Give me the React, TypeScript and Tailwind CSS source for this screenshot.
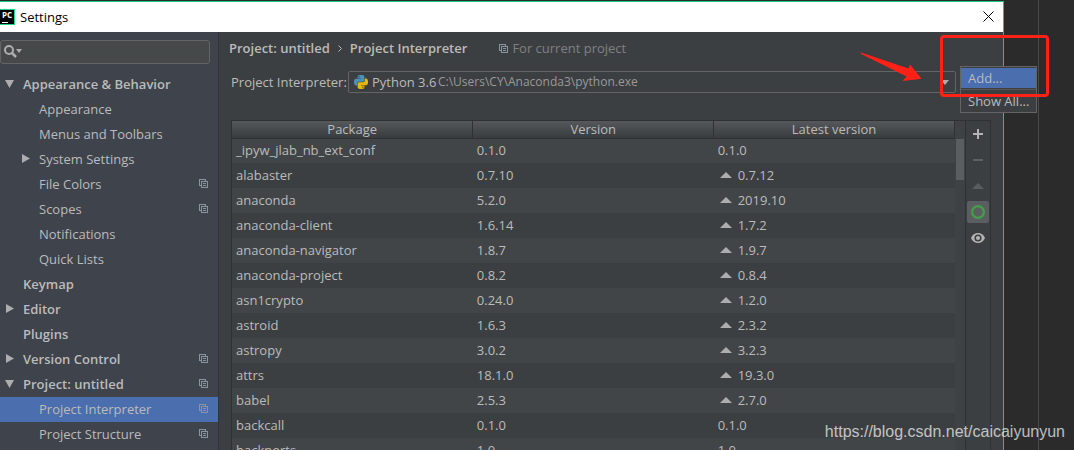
import { clsx } from 'clsx';

type TreeItem = {
    label: string;
    level: 0 | 1;
    arrow?: 'open' | 'closed';
    perProject?: boolean;
    selected?: boolean;
};

const treeItems: TreeItem[] = [
    { label: 'Appearance & Behavior', level: 0, arrow: 'open' },
    { label: 'Appearance', level: 1 },
    { label: 'Menus and Toolbars', level: 1 },
    { label: 'System Settings', level: 1, arrow: 'closed' },
    { label: 'File Colors', level: 1, perProject: true },
    { label: 'Scopes', level: 1, perProject: true },
    { label: 'Notifications', level: 1 },
    { label: 'Quick Lists', level: 1 },
    { label: 'Keymap', level: 0 },
    { label: 'Editor', level: 0, arrow: 'closed' },
    { label: 'Plugins', level: 0 },
    { label: 'Version Control', level: 0, arrow: 'closed', perProject: true },
    { label: 'Project: untitled', level: 0, arrow: 'open', perProject: true },
    { label: 'Project Interpreter', level: 1, perProject: true, selected: true },
    { label: 'Project Structure', level: 1, perProject: true },
];

const packages = [
    { name: '_ipyw_jlab_nb_ext_conf', version: '0.1.0', latest: '0.1.0' },
    { name: 'alabaster', version: '0.7.10', latest: '0.7.12' },
    { name: 'anaconda', version: '5.2.0', latest: '2019.10' },
    { name: 'anaconda-client', version: '1.6.14', latest: '1.7.2' },
    { name: 'anaconda-navigator', version: '1.8.7', latest: '1.9.7' },
    { name: 'anaconda-project', version: '0.8.2', latest: '0.8.4' },
    { name: 'asn1crypto', version: '0.24.0', latest: '1.2.0' },
    { name: 'astroid', version: '1.6.3', latest: '2.3.2' },
    { name: 'astropy', version: '3.0.2', latest: '3.2.3' },
    { name: 'attrs', version: '18.1.0', latest: '19.3.0' },
    { name: 'babel', version: '2.5.3', latest: '2.7.0' },
    { name: 'backcall', version: '0.1.0', latest: '0.1.0' },
    { name: 'backports', version: '1.0', latest: '1.0' },
];

const PYTHON_HALF =
    'M14.25.18l.9.2.73.26.59.3.45.32.34.34.25.34.16.33.1.3.04.26.02.2-.01.13V8.5l-.05.63-.13.55-.21.46-.26.38-.3.31-.33.25-.35.19-.35.14-.33.1-.3.07-.26.04-.21.02H8.77l-.69.05-.59.14-.5.22-.41.27-.33.32-.27.35-.2.36-.15.37-.1.35-.07.32-.04.27-.02.21v3.06H3.17l-.21-.03-.28-.07-.32-.12-.35-.18-.36-.26-.36-.36-.35-.46-.32-.59-.28-.73-.21-.88-.14-1.05-.05-1.23.06-1.22.16-1.04.24-.87.32-.71.36-.57.4-.44.42-.33.42-.24.4-.16.36-.1.32-.05.24-.01h.16l.06.01h8.16v-.83H6.18l-.01-2.75-.02-.37.05-.34.11-.31.17-.28.25-.26.31-.23.38-.2.44-.18.51-.15.58-.12.64-.1.71-.06.77-.04.84-.02 1.27.05zm-6.3 1.98l-.23.33-.08.41.08.41.23.34.33.22.41.09.41-.09.33-.22.23-.34.08-.41-.08-.41-.23-.33-.33-.22-.41-.09-.41.09z';

const PythonIcon = () => (
    <svg viewBox="0 0 24 24" className="h-[14px] w-[14px]" aria-hidden="true">
        <path d={PYTHON_HALF} fill="#4a92b8" />
        <path d={PYTHON_HALF} fill="#e6b70c" transform="rotate(180 12 12)" />
    </svg>
);

const ProjectIcon = () => (
    <svg viewBox="0 0 9 9" className="h-[9px] w-[9px] shrink-0" fill="none" stroke="#8a949e" shapeRendering="crispEdges" aria-hidden="true">
        <path d="M2 6.5H.5v-6h6V2M2.5 2.5h6v6h-6zM4 4.5h3M4 6.5h3" />
    </svg>
);

const TreeArrow = ({ kind }: { kind: 'open' | 'closed' }) => (
    <svg viewBox="0 0 9 9" className="h-[9px] w-[9px]" fill="#adadad" aria-hidden="true">
        {kind === 'open' ? <path d="M0 1h9L4.5 9z" /> : <path d="M1 0v9L9 4.5z" />}
    </svg>
);

const UpIcon = ({ className }: { className?: string }) => (
    <svg viewBox="0 0 12 6" className={clsx('h-[6px] w-[12px]', className)} fill="currentColor" aria-hidden="true">
        <path d="M0 6 6 0l6 6z" />
    </svg>
);

const TitleBar = () => (
    <header className="flex h-[30px] shrink-0 items-center bg-white pb-px">
        <span className="flex h-[16px] w-[15px] flex-col border border-l-0 border-[#21d789] bg-black pl-[2px]">
            <span className="text-[8px] leading-[10px] font-bold text-white">PC</span>
            <span className="mt-[2px] h-px w-[6px] bg-white" />
        </span>
        <h1 className="ml-[5px] flex-1 text-black">Settings</h1>
        <button type="button" aria-label="Close" className="mr-[9px]">
            <svg viewBox="0 0 11 11" className="h-[11px] w-[11px]" stroke="#000" fill="none" aria-hidden="true">
                <path d="M.5.5l10 10M10.5.5l-10 10" />
            </svg>
        </button>
    </header>
);

const Sidebar = () => (
    <nav className="w-[219px] shrink-0 border-r border-[#323437] bg-[#3f434c] pt-2">
        <div className="mr-2 flex h-6 items-center rounded-[3px] border border-[#646464] bg-[#45494a] pb-px pl-[3px]">
            <svg viewBox="0 0 18 13" className="h-[13px] w-[18px]" aria-hidden="true">
                <circle cx="5" cy="5" r="4" fill="none" stroke="#adadad" strokeWidth="2" />
                <path d="M7.5 7.5l4.5 4.5" stroke="#adadad" strokeWidth="2.5" />
                <path d="M12 4h6l-3 4z" fill="#adadad" />
            </svg>
            <input type="text" aria-label="Search settings" className="min-w-0 flex-1 bg-transparent px-1 outline-none" />
        </div>
        <ul className="mt-2">
            {treeItems.map((item) => (
                <li key={item.label}>
                    <button
                        type="button"
                        className={clsx(
                            'flex h-[25px] w-full items-center pr-[10px] pb-[2px] text-left',
                            item.level === 0 ? 'pl-[5px] font-semibold' : 'pl-[21px]',
                            item.selected && 'bg-[#4b6eaf]'
                        )}
                    >
                        <span className="flex w-[18px] shrink-0 items-center">
                            {item.arrow && <TreeArrow kind={item.arrow} />}
                        </span>
                        <span className="flex-1 whitespace-nowrap">{item.label}</span>
                        {item.perProject && <ProjectIcon />}
                    </button>
                </li>
            ))}
        </ul>
    </nav>
);

const PackageTable = () => (
    <div className="flex min-w-0 flex-1 overflow-hidden border-l border-[#2f3133]">
        <table className="w-full table-fixed self-start border-collapse">
            <thead>
                <tr className="h-[17px] bg-linear-to-b from-[#55595c] to-[#393c3e]">
                    {['Package', 'Version', 'Latest version'].map((title) => (
                        <th
                            key={title}
                            scope="col"
                            className="w-1/3 border-r border-b border-[#2f3133] p-0 text-center leading-[16px] font-normal"
                        >
                            {title}
                        </th>
                    ))}
                </tr>
            </thead>
            <tbody>
                {packages.map((pkg) => (
                    <tr key={pkg.name} className="h-[25px] odd:bg-[#414547]">
                        <td className="p-0 pb-px pl-1">{pkg.name}</td>
                        <td className="p-0 pb-px pl-1">{pkg.version}</td>
                        <td className="p-0 pb-px pl-1">
                            <span className="flex items-center">
                                {pkg.latest !== pkg.version && <UpIcon className="mr-[6px] ml-[2px] text-[#adadad]" />}
                                {pkg.latest}
                            </span>
                        </td>
                    </tr>
                ))}
            </tbody>
        </table>
        {/* scrollbar */}
        <div className="w-[10px] shrink-0 bg-[#3f4244] px-px pt-[18px]">
            <div className="h-[41px] bg-[#5b5e60]" />
        </div>
    </div>
);

const Toolbar = () => (
    <div className="flex w-[26px] shrink-0 flex-col items-center gap-1 border-x border-[#2f3133] pt-[2px]">
        <button type="button" aria-label="Install" className="grid h-[22px] w-[22px] place-items-center">
            <svg viewBox="0 0 10 10" className="h-[10px] w-[10px]" stroke="#b4b4b4" strokeWidth="2" aria-hidden="true">
                <path d="M5 0v10M0 5h10" />
            </svg>
        </button>
        <button type="button" aria-label="Uninstall" className="grid h-[22px] w-[22px] place-items-center">
            <span className="h-[2px] w-[10px] bg-[#5e6060]" />
        </button>
        <button type="button" aria-label="Upgrade" className="grid h-[22px] w-[22px] place-items-center">
            <UpIcon className="text-[#5a5d5e]" />
        </button>
        <button type="button" aria-label="Use Conda" className="grid h-[22px] w-[22px] place-items-center rounded-[2px] bg-[#5a5e60]">
            <svg viewBox="0 0 14 14" className="h-[14px] w-[14px]" fill="none" aria-hidden="true">
                <circle cx="7" cy="7" r="5.8" stroke="#43a047" strokeWidth="2.4" />
                <circle cx="7" cy="7" r="5" stroke="#5a5e60" strokeWidth=".5" strokeDasharray="1 2" />
            </svg>
        </button>
        <button type="button" aria-label="Show early releases" className="grid h-[22px] w-[22px] place-items-center">
            <svg viewBox="0 0 14 10" className="h-[10px] w-[14px]" aria-hidden="true">
                <path d="M0 5C1.5 1.8 4 0 7 0s5.5 1.8 7 5c-1.5 3.2-4 5-7 5S1.5 8.2 0 5z" fill="#b4b4b4" />
                <circle cx="7" cy="5" r="3.6" fill="#3c3f41" />
                <circle cx="7" cy="5" r="2.1" fill="#b4b4b4" />
            </svg>
        </button>
    </div>
);

const InterpreterPage = () => (
    <main className="flex min-w-0 flex-1 flex-col bg-[#3c3f41] pr-3 pl-3">
        <div className="-ml-[2px] flex h-[33px] shrink-0 items-center pb-px font-semibold whitespace-nowrap">
            <span>Project: untitled</span>
            <svg viewBox="0 0 4 7" className="mx-2 h-[7px] w-[4px]" fill="none" stroke="#bbb" aria-hidden="true">
                <path d="M.5.5l3 3-3 3" />
            </svg>
            <span>Project Interpreter</span>
            <span className="ml-8 flex items-center gap-1 font-normal text-[#808080]">
                <ProjectIcon />
                For current project
            </span>
        </div>

        <div className="mt-[6px] mr-[35px] flex h-[22px] shrink-0 items-center">
            <label htmlFor="interpreter" className="w-[117px] shrink-0 whitespace-nowrap">
                Project Interpreter:
            </label>
            <div className="grid h-full min-w-0 flex-1 items-center rounded-[2px] border border-[#646464]">
                <div className="col-start-1 row-start-1 flex items-center pr-[6px] pl-[5px]">
                    <PythonIcon />
                    <span className="ml-[70px] flex-1 text-[12px] text-[#999]">C:\Users\CY\Anaconda3\python.exe</span>
                    <svg viewBox="0 0 8 5" className="h-[5px] w-[8px]" fill="#adadad" aria-hidden="true">
                        <path d="M0 0h8L4 5z" />
                    </svg>
                </div>
                <select
                    id="interpreter"
                    defaultValue="py36"
                    className="col-start-1 row-start-1 h-full w-full appearance-none bg-transparent pl-[23px] outline-none"
                >
                    <option value="py36">Python 3.6</option>
                </select>
            </div>
        </div>

        <div className="mt-[27px] flex min-h-0 flex-1 border-t border-[#2f3133]">
            <PackageTable />
            <Toolbar />
        </div>
    </main>
);

export default function App() {
    return (
        <div className="relative flex h-screen overflow-hidden bg-[#2b2b2b] font-['Open_Sans',sans-serif] text-[13px] leading-[18px] text-[#bbbbbb]">
            <section className="mt-px flex min-w-0 flex-1 flex-col border-t border-r border-[#20c47e]">
                <TitleBar />
                <div className="flex min-h-0 flex-1">
                    <Sidebar />
                    <InterpreterPage />
                </div>
            </section>
            {/* editor behind the dialog */}
            <div className="flex w-[70px] shrink-0">
                <div className="w-[35px] border-r border-[#4b4b4b]" />
            </div>

            <ul className="absolute top-[66px] right-[37px] w-[77px] border border-[#646464] bg-[#3c3f41]">
                <li className="pt-px">
                    <button type="button" className="block h-[20px] w-full bg-[#4b6eaf] pb-px pl-[7px] text-left">Add...</button>
                </li>
                <li className="mt-px border-t border-[#555555]">
                    <button type="button" className="block h-[22px] w-full pb-px pl-[7px] text-left">Show All...</button>
                </li>
            </ul>

            {/* red annotation */}
            <div className="pointer-events-none absolute top-[35px] right-[25px] h-[62px] w-[109px] rounded-[4px] border-3 border-[#ff2116]" />
            <svg viewBox="0 0 62 30" className="pointer-events-none absolute top-[52px] right-[152px] h-[30px] w-[62px]" aria-hidden="true">
                <path d="M1 .5C.6.6.6 1.6 1.2 2L46.5 24.5 42.5 29 61.5 26.7 50 12.5 48.5 16.5z" fill="#ff2116" />
            </svg>

            <a
                href="https://blog.csdn.net/caicaiyunyun"
                className="absolute right-[9px] bottom-[8px] font-['Liberation_Sans',sans-serif] text-[16px] leading-[20px] text-white/70"
            >
                https://blog.csdn.net/caicaiyunyun
            </a>
        </div>
    );
}
